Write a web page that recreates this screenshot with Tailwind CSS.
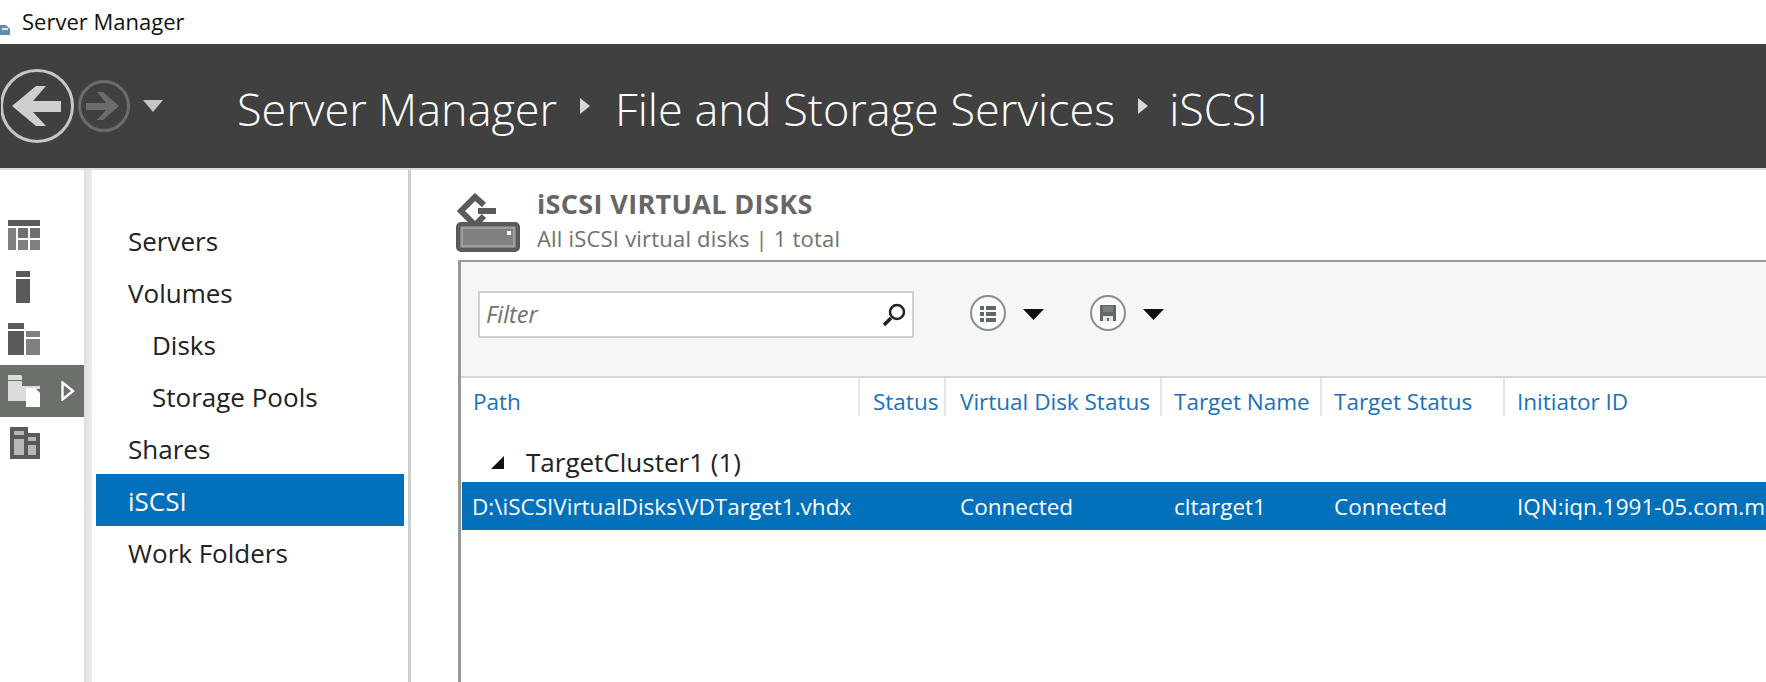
<!DOCTYPE html>
<html lang="en">
<head>
    <meta charset="UTF-8">
    <title>Server Manager</title>
    <script src="https://cdn.jsdelivr.net/npm/@tailwindcss/browser@4"></script>
</head>
<body class="bg-white h-[682px] w-[1766px] overflow-hidden font-['Open_Sans',sans-serif]">
    <!-- Title bar -->
    <div class="h-[44px] flex items-center relative">
        <svg class="w-[10px] h-[16px] mt-[10px]" viewBox="0 0 10 16"><path d="M0 6h6l4 4v6H0z" fill="#5f8fb0"/><path d="M2 9h6v2H2z" fill="#dfe8ee"/></svg>
        <span class="ml-[12px] mt-[-2px] text-[22px] text-[#111]">Server Manager</span>
    </div>

    <!-- Breadcrumb bar -->
    <div class="h-[124px] bg-[#404040] flex items-center">
        <svg class="w-[74px] h-[78px] shrink-0 ml-[1px]" viewBox="0 0 74 78">
            <circle cx="36" cy="39" r="35.5" fill="none" stroke="#c4c7c4" stroke-width="3"/>
            <path d="M11 39 L35 19 H45 L32 34 H60 V45 H32 L45 59 H35 Z" fill="#cdd0cd"/>
        </svg>
        <svg class="w-[54px] h-[54px] shrink-0 ml-[2px]" viewBox="0 0 54 54">
            <circle cx="27" cy="27" r="24.5" fill="none" stroke="#6a6d6a" stroke-width="3"/>
            <path d="M42 27 L26 13 H20 L29 24 H9 V31 H29 L20 41 H26 Z" fill="#6a6d6a"/>
        </svg>
        <svg class="w-[20px] h-[12px] shrink-0 ml-[12px]" viewBox="0 0 20 12"><path d="M0 0h20L10 12z" fill="#c4c7c4"/></svg>
        <div class="ml-[74px] mt-[4px] flex items-center text-[45px] font-light text-white leading-none">
            <span>Server Manager</span>
            <svg class="w-[11px] h-[16px] ml-[22px] mr-[25px] mt-[-4px]" viewBox="0 0 11 16"><path d="M1 0l10 8-10 8z" fill="#d8d8d8"/></svg>
            <span>File and Storage Services</span>
            <svg class="w-[11px] h-[16px] ml-[22px] mr-[21px] mt-[-4px]" viewBox="0 0 11 16"><path d="M1 0l10 8-10 8z" fill="#d8d8d8"/></svg>
            <span>iSCSI</span>
        </div>
    </div>

    <div class="flex h-[514px] border-t-2 border-[#dcdcdc]">
        <!-- Icon rail -->
        <div class="w-[84px] shrink-0 pt-[39px]">
            <div class="h-[52px] flex items-center pl-[8px]">
                <svg class="w-[32px] h-[30px]" viewBox="0 0 32 30">
                    <rect width="32" height="6" fill="#5a5a5a"/>
                    <rect y="8" width="8" height="22" fill="#808080"/>
                    <rect x="10" y="8" width="10" height="10" fill="#6f6f6f"/>
                    <rect x="22" y="8" width="10" height="10" fill="#6f6f6f"/>
                    <rect x="10" y="20" width="10" height="10" fill="#808080"/>
                    <rect x="22" y="20" width="10" height="10" fill="#808080"/>
                </svg>
            </div>
            <div class="h-[52px] flex items-center pl-[16px]">
                <svg class="w-[14px] h-[32px]" viewBox="0 0 14 32">
                    <rect width="14" height="6" fill="#5a5a5a"/>
                    <rect y="8" width="14" height="24" fill="#5a5a5a"/>
                </svg>
            </div>
            <div class="h-[52px] flex items-center pl-[8px]">
                <svg class="w-[32px] h-[32px]" viewBox="0 0 32 32">
                    <rect width="16" height="6" fill="#5a5a5a"/>
                    <rect y="8" width="16" height="24" fill="#5a5a5a"/>
                    <rect x="18" y="8" width="14" height="6" fill="#808080"/>
                    <rect x="18" y="16" width="14" height="16" fill="#808080"/>
                </svg>
            </div>
            <div class="h-[52px] flex items-center pl-[8px] bg-[#6b706b]">
                <svg class="w-[32px] h-[32px]" viewBox="0 0 32 32">
                    <path d="M0 0h13l1 1v4H0z" fill="#dcdcdc"/>
                    <path d="M0 6h14v5h18v3H18v12H0z" fill="#dcdcdc"/>
                    <path d="M18 13h9l5 5v14H18z" fill="#fff"/>
                </svg>
                <svg class="w-[14px] h-[20px] ml-[21px]" viewBox="0 0 14 20"><path d="M1.5 1.5v17L12 10z" fill="none" stroke="#fff" stroke-width="2.4"/></svg>
            </div>
            <div class="h-[52px] flex items-center pl-[10px]">
                <svg class="w-[30px] h-[32px]" viewBox="0 0 30 32">
                    <path d="M0 0h18v6h12v26H0z" fill="#5a5a5a"/>
                    <rect x="4" y="4" width="10" height="4" fill="#b8b8b8"/>
                    <rect x="4" y="12" width="10" height="16" fill="#b8b8b8"/>
                    <rect x="18" y="10" width="8" height="4" fill="#b8b8b8"/>
                    <rect x="18" y="18" width="8" height="10" fill="#b8b8b8"/>
                </svg>
            </div>
        </div>
        <div class="w-[8px] shrink-0 bg-gradient-to-r from-[#dedede] to-[#ececec]"></div>

        <!-- Nav -->
        <nav class="w-[319px] shrink-0 border-r-[3px] border-[#ccd0d0] pt-[44px] pr-[4px] pl-[4px] text-[26px] text-[#222]">
            <div class="h-[52px] flex items-center pt-[3px] pl-[32px]">Servers</div>
            <div class="h-[52px] flex items-center pt-[3px] pl-[32px]">Volumes</div>
            <div class="h-[52px] flex items-center pt-[3px] pl-[56px]">Disks</div>
            <div class="h-[52px] flex items-center pt-[3px] pl-[56px]">Storage Pools</div>
            <div class="h-[52px] flex items-center pt-[3px] pl-[32px]">Shares</div>
            <div class="h-[52px] flex items-center pt-[3px] pl-[32px] bg-[#0370bc] text-white">iSCSI</div>
            <div class="h-[52px] flex items-center pt-[3px] pl-[32px]">Work Folders</div>
        </nav>

        <!-- Content -->
        <div class="flex-1 min-w-0 pl-[47px]">
            <div class="h-[90px] flex items-start pt-[23px]">
                <svg class="w-[64px] h-[59px] shrink-0 ml-[-2px]" viewBox="0 0 64 59">
                    <path d="M28 12L19 4L5 18L19 32L28 23" fill="none" stroke="#5a5a5a" stroke-width="6"/>
                    <rect x="22" y="15" width="18" height="6" fill="#5a5a5a"/>
                    <rect x="2" y="31" width="60" height="26" rx="3" fill="#808080" stroke="#5a5a5a" stroke-width="4"/>
                    <rect x="6" y="35" width="52" height="18" fill="none" stroke="#a8a8a8" stroke-width="1.5"/>
                    <rect x="51" y="38" width="4" height="4" fill="#fff"/>
                </svg>
                <div class="ml-[17px] mt-[-4px]">
                    <div class="text-[27px] font-bold text-[#666] leading-[30px] tracking-[0.35px] whitespace-nowrap">iSCSI VIRTUAL DISKS</div>
                    <div class="text-[22px] text-[#707070] leading-[26px] mt-[6px] tracking-[0.2px] whitespace-nowrap">All iSCSI virtual disks | 1 total</div>
                </div>
            </div>

            <!-- Panel -->
            <div class="border-l-[3px] border-t-[2px] border-[#999] h-[424px]">
                <div class="h-[116px] bg-[#f6f6f6] border-b-2 border-[#d4d6d6] flex items-start pt-[29px] pl-[17px]">
                    <div class="w-[436px] h-[47px] bg-white border-2 border-[#ccd0d0] flex items-center justify-between pl-[6px] pr-[5px]">
                        <span class="text-[23.5px] italic text-[#707070]">Filter</span>
                        <svg class="w-[26px] h-[26px]" viewBox="0 0 26 26">
                            <circle cx="16" cy="10" r="7" fill="none" stroke="#222" stroke-width="2.5"/>
                            <path d="M10 16L3 23" stroke="#222" stroke-width="3.5"/>
                        </svg>
                    </div>
                    <svg class="w-[38px] h-[38px] ml-[55px] mt-[3px]" viewBox="0 0 38 38">
                        <circle cx="19" cy="19" r="17" fill="#fbfbfb" stroke="#8a8f8f" stroke-width="2"/>
                        <path d="M11 12h4v4h-4zM17 12h10v4H17zM11 18h4v4h-4zM17 18h10v4H17zM11 24h4v4h-4zM17 24h10v4H17z" fill="#606868"/>
                    </svg>
                    <svg class="w-[21px] h-[11px] ml-[16px] mt-[18px]" viewBox="0 0 21 11"><path d="M0 0h21L10.5 11z" fill="#111"/></svg>
                    <svg class="w-[38px] h-[38px] ml-[45px] mt-[3px]" viewBox="0 0 38 38">
                        <circle cx="19" cy="19" r="17" fill="#fbfbfb" stroke="#8a8f8f" stroke-width="2"/>
                        <path d="M11 11h16v16H11z" fill="#606868"/>
                        <path d="M14 12h10v6H14z" fill="#7a8181"/>
                        <path d="M14 22h10v5H14z" fill="#e4e6e6"/>
                        <path d="M18 24h2v3h-2z" fill="#606868"/>
                    </svg>
                    <svg class="w-[21px] h-[11px] ml-[16px] mt-[18px]" viewBox="0 0 21 11"><path d="M0 0h21L10.5 11z" fill="#111"/></svg>
                </div>

                <!-- Table -->
                <div class="grid grid-cols-[399px_86px_216px_160px_183px_1fr] text-[22.5px] leading-[30px]">
                    <div class="h-[38px] pl-[12px] pt-[9px] text-[#1a70bd] border-r-2 border-[#e6e6e6]">Path</div>
                    <div class="h-[38px] pl-[13px] pt-[9px] text-[#1a70bd] border-r-2 border-[#e6e6e6] whitespace-nowrap">Status</div>
                    <div class="h-[38px] pl-[14px] pt-[9px] text-[#1a70bd] border-r-2 border-[#e6e6e6] whitespace-nowrap">Virtual Disk Status</div>
                    <div class="h-[38px] pl-[12px] pt-[9px] text-[#1a70bd] border-r-2 border-[#e6e6e6] whitespace-nowrap">Target Name</div>
                    <div class="h-[38px] pl-[12px] pt-[9px] text-[#1a70bd] border-r-2 border-[#e6e6e6] whitespace-nowrap">Target Status</div>
                    <div class="h-[38px] pl-[12px] pt-[9px] text-[#1a70bd] whitespace-nowrap">Initiator ID</div>

                    <div class="col-span-6 h-[66px] flex items-end pl-[30px] pb-[2px] text-[26px] leading-[36px] text-[#222]">
                        <div class="flex items-center">
                            <svg class="w-[13px] h-[13px]" viewBox="0 0 13 13"><path d="M13 0v13H0z" fill="#111"/></svg>
                            <span class="ml-[22px]">TargetCluster1 (1)</span>
                        </div>
                    </div>

                    <div class="h-[48px] flex items-center ml-[1px] pt-[2px] pl-[10px] bg-[#0370bc] text-white whitespace-nowrap">D:\iSCSIVirtualDisks\VDTarget1.vhdx</div>
                    <div class="h-[48px] bg-[#0370bc]"></div>
                    <div class="h-[48px] flex items-center pt-[2px] pl-[14px] bg-[#0370bc] text-white">Connected</div>
                    <div class="h-[48px] flex items-center pt-[2px] pl-[12px] bg-[#0370bc] text-white">cltarget1</div>
                    <div class="h-[48px] flex items-center pt-[2px] pl-[12px] bg-[#0370bc] text-white">Connected</div>
                    <div class="h-[48px] flex items-center pt-[2px] pl-[12px] bg-[#0370bc] text-white whitespace-nowrap overflow-hidden">IQN:iqn.1991-05.com.m</div>
                </div>
            </div>
        </div>
    </div>
</body>
</html>
